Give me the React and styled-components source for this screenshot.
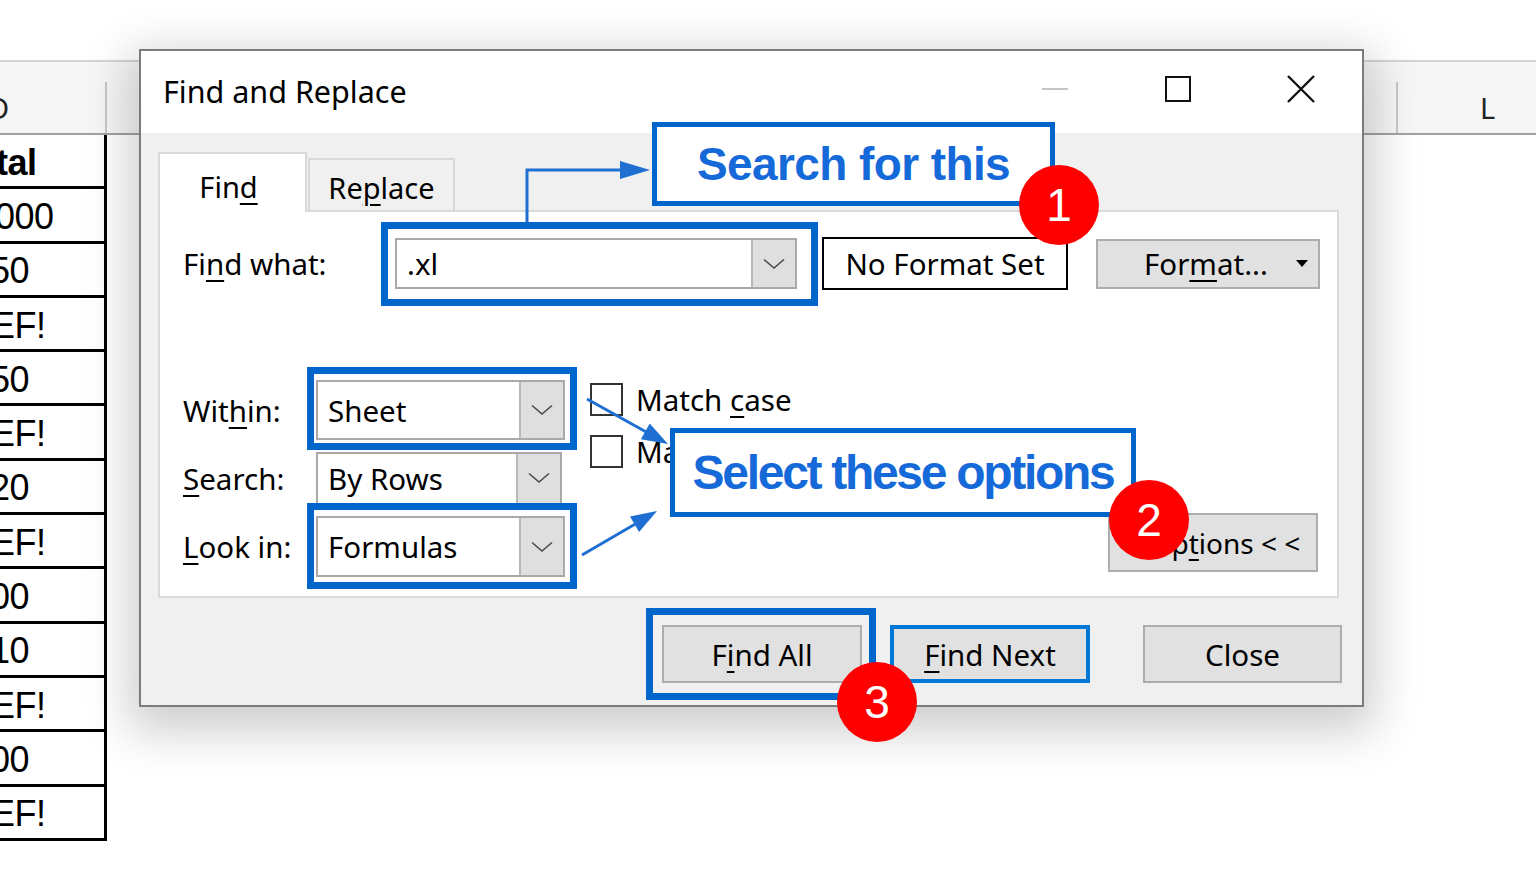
import styled, { createGlobalStyle } from "styled-components"

const GlobalStyle = createGlobalStyle`
  html, body {
    margin: 0;
    padding: 0;
    background: #fff;
  }
  body {
    font-family: "Noto Sans", "Liberation Sans", sans-serif;
    color: #000;
  }
`

const BLUE = "#0066cc"

const rows = [
  { text: "tal", shift: -4, bold: true },
  { text: "000", shift: -5 },
  { text: "50", shift: -10 },
  { text: "EF!", shift: -9 },
  { text: "50", shift: -10 },
  { text: "EF!", shift: -9 },
  { text: "20", shift: -10 },
  { text: "EF!", shift: -9 },
  { text: "00", shift: -10 },
  { text: "10", shift: -10 },
  { text: "EF!", shift: -9 },
  { text: "00", shift: -10 },
  { text: "EF!", shift: -9 },
]

const Chevron = () => (
  <svg width="22" height="12" viewBox="0 0 22 12">
    <polyline points="1,1.5 11,10 21,1.5" fill="none" stroke="#4a4a4a" strokeWidth="1.6" />
  </svg>
)

const Combo = ({ value, w, h, highlight }) => (
  <ComboBox $w={w} $h={h}>
    <ComboText>{value}</ComboText>
    <DropBtn><Chevron /></DropBtn>
    {highlight && <Highlight $inset={highlight} />}
  </ComboBox>
)

const App = () => {
  return (
    <Screen>
      <GlobalStyle />
      <Sheet>
        <HeaderBar>
          <ColHead $w={107} $shift={-12} $divider>D</ColHead>
          <HeadGap />
          <ColHead $w={140} $pad={82} $left>L</ColHead>
        </HeaderBar>
        {rows.map((r, i) => (
          <SheetRow key={i} $bold={r.bold}>
            <CellText $shift={r.shift}>{r.text}</CellText>
          </SheetRow>
        ))}
      </Sheet>

      <Dialog>
        <TitleBar>
          <Title>Find and Replace</Title>
          <WinControls>
            <WinBtn><MinLine /></WinBtn>
            <WinBtn><MaxBox /></WinBtn>
            <WinBtn>
              <svg width="28" height="28" viewBox="0 0 28 28">
                <path d="M1 1 L27 27 M27 1 L1 27" stroke="#111" strokeWidth="2.4" />
              </svg>
            </WinBtn>
          </WinControls>
        </TitleBar>

        <Body>
          <Tabs>
            <Tab $active><span>Fin<Key>d</Key></span></Tab>
            <Tab><span>Re<Key>p</Key>lace</span></Tab>
          </Tabs>

          <Panel>
            <FindRow>
              <Label $w={212}><span>Fi<Key>n</Key>d what:</span></Label>
              <Combo value=".xl" w={402} h={51} highlight="-18px -23px -19px -16px" />
              <FormatPreview>No Format Set</FormatPreview>
              <FormatBtn>
                <span>For<Key>m</Key>at...</span>
                <Caret />
              </FormatBtn>
            </FindRow>

            <Lower>
              <OptionGrid>
                <Label><span>Wit<Key>h</Key>in:</span></Label>
                <Combo value="Sheet" w={249} h={60} highlight="-15px -14px -12px -11px" />
                <Label><span><Key>S</Key>earch:</span></Label>
                <Combo value="By Rows" w={246} h={53} />
                <Label><span><Key>L</Key>ook in:</span></Label>
                <Combo value="Formulas" w={249} h={61} highlight="-15px -14px -14px -11px" />
              </OptionGrid>

              <Checks>
                <CheckRow><CheckBox /><span>Match <Key>c</Key>ase</span></CheckRow>
                <CheckRow><CheckBox /><span>Match entire cell c<Key>o</Key>ntents</span></CheckRow>
              </Checks>

              <OptionsBtn><span>Op<Key>t</Key>ions &lt; &lt;</span></OptionsBtn>
            </Lower>
          </Panel>

          <Actions>
            <DlgButton $w={200}>
              <span>F<Key>i</Key>nd All</span>
              <Highlight $inset="-19px -16px -19px -18px" />
            </DlgButton>
            <DlgButton $w={200} $default>
              <span><Key>F</Key>ind Next</span>
            </DlgButton>
            <DlgButton $w={199} $gap={53}>Close</DlgButton>
          </Actions>
        </Body>
      </Dialog>

      <Arrows width="1536" height="885" viewBox="0 0 1536 885">
        <g stroke="#1f6fd2" strokeWidth="3" fill="none">
          <polyline points="527,222 527,170 624,170" />
          <line x1="587" y1="399" x2="648" y2="433" />
          <line x1="582" y1="555" x2="637" y2="523" />
        </g>
        <g fill="#1f6fd2">
          <polygon points="620,161 650,170 620,179" />
          <polygon points="668,444 640.9,439.3 649.7,423.5" />
          <polygon points="657,511 639.1,532 630,516.4" />
        </g>
      </Arrows>

      <Callout $x={652} $y={122} $w={403} $h={84} $size={46} $spacing={-0.6}>
        Search for this
      </Callout>
      <Callout $x={670} $y={428} $w={466} $h={89} $size={48} $spacing={-2.3}>
        Select these options
      </Callout>

      <Badge $x={1059} $y={205}>1</Badge>
      <Badge $x={1149} $y={520}>2</Badge>
      <Badge $x={877} $y={702}>3</Badge>
    </Screen>
  )
}

const Screen = styled.div`
  position: relative;
  width: 1536px;
  height: 885px;
  overflow: hidden;
  background: #fff;
`

const Sheet = styled.div`
  display: flex;
  flex-direction: column;
  padding-top: 60px;
  font-family: "Liberation Sans", Arial, sans-serif;
`

const HeaderBar = styled.div`
  display: flex;
  height: 75px;
  box-sizing: border-box;
  border-top: 2px solid #d4d4d4;
  border-bottom: 2px solid #a2a2a2;
  background: #f6f6f6;
`

const ColHead = styled.div`
  width: ${p => p.$w}px;
  flex: none;
  box-sizing: border-box;
  margin-top: 20px;
  display: flex;
  align-items: center;
  overflow: hidden;
  padding-left: ${p => p.$pad || 0}px;
  text-indent: ${p => p.$shift || 0}px;
  font-family: "Noto Sans", sans-serif;
  font-size: 29px;
  color: #222;
  border-right: ${p => (p.$divider ? "2px solid #c8c8c8" : "none")};
  border-left: ${p => (p.$left ? "2px solid #c8c8c8" : "none")};
`

const HeadGap = styled.div`
  flex: 1;
`

const SheetRow = styled.div`
  width: 107px;
  height: 54.3px;
  box-sizing: border-box;
  border-right: 3px solid #000;
  border-bottom: 3px solid #000;
  display: flex;
  align-items: center;
  padding-top: 4px;
  overflow: hidden;
  white-space: nowrap;
  font-size: 36px;
  font-weight: ${p => (p.$bold ? 700 : 400)};
  letter-spacing: -0.5px;
`

const CellText = styled.span`
  margin-left: ${p => p.$shift}px;
`

const Dialog = styled.div`
  position: absolute;
  left: 139px;
  top: 49px;
  width: 1225px;
  height: 658px;
  box-sizing: border-box;
  border: 2px solid #7b7b7b;
  background: #f0f0f0;
  box-shadow: 0 14px 44px 10px rgba(0, 0, 0, 0.2);
  display: flex;
  flex-direction: column;
  font-family: "Noto Sans", "Liberation Sans", sans-serif;
  font-size: 29.5px;
`

const TitleBar = styled.div`
  height: 82px;
  flex: none;
  display: flex;
  align-items: center;
  background: #fff;
  padding-left: 22px;
`

const Title = styled.div`
  font-size: 30.5px;
  margin-top: -2px;
`

const WinControls = styled.div`
  margin-left: auto;
  display: flex;
  height: 100%;
`

const WinBtn = styled.div`
  width: 123px;
  display: flex;
  align-items: center;
  justify-content: center;
  margin-top: -6px;
`

const MinLine = styled.div`
  width: 26px;
  height: 2px;
  background: #c4c4c4;
`

const MaxBox = styled.div`
  width: 26px;
  height: 26px;
  box-sizing: border-box;
  border: 2.5px solid #111;
`

const Body = styled.div`
  flex: 1;
  display: flex;
  flex-direction: column;
  padding: 19px 20px 0 17px;
`

const Tabs = styled.div`
  display: flex;
  align-items: flex-end;
  height: 58px;
  position: relative;
  z-index: 1;
`

const Tab = styled.div`
  box-sizing: border-box;
  width: ${p => (p.$active ? 149 : 147)}px;
  height: ${p => (p.$active ? 60 : 52)}px;
  margin-bottom: ${p => (p.$active ? -2 : 0)}px;
  margin-left: ${p => (p.$active ? 0 : 1)}px;
  background: ${p => (p.$active ? "#fff" : "#f0f0f0")};
  border: 2px solid #d9d9d9;
  border-bottom: none;
  display: flex;
  align-items: center;
  justify-content: center;
  padding-top: ${p => (p.$active ? 6 : 4)}px;
  padding-right: ${p => (p.$active ? 8 : 0)}px;
  font-size: 29px;
`

const Key = styled.span`
  text-decoration: underline;
  text-decoration-thickness: 2px;
  text-underline-offset: 5px;
`

const Panel = styled.div`
  height: 388px;
  margin-right: 3px;
  box-sizing: border-box;
  border: 2px solid #d9d9d9;
  background: #fff;
  padding: 25px 0 0 23px;
  display: flex;
  flex-direction: column;
`

const FindRow = styled.div`
  display: flex;
  align-items: center;
  height: 53px;
`

const Label = styled.div`
  width: ${p => (p.$w ? `${p.$w}px` : "auto")};
  flex: none;
  display: flex;
  align-items: center;
  white-space: nowrap;
`

const ComboBox = styled.div`
  position: relative;
  width: ${p => p.$w}px;
  height: ${p => p.$h}px;
  flex: none;
  box-sizing: border-box;
  border: 2px solid #a9a9a9;
  background: #fff;
  display: flex;
  align-items: stretch;
`

const ComboText = styled.div`
  flex: 1;
  display: flex;
  align-items: center;
  padding-left: 10px;
`

const DropBtn = styled.div`
  width: 44px;
  box-sizing: border-box;
  border-left: 2px solid #b8b8b8;
  background: #dfdfdf;
  display: flex;
  align-items: center;
  justify-content: center;
`

const Highlight = styled.div`
  position: absolute;
  inset: ${p => p.$inset};
  border: 7px solid ${BLUE};
  pointer-events: none;
`

const FormatPreview = styled.div`
  margin-left: 25px;
  width: 246px;
  height: 53px;
  box-sizing: border-box;
  border: 2px solid #000;
  display: flex;
  align-items: center;
  justify-content: center;
`

const FormatBtn = styled.div`
  margin-left: 28px;
  width: 224px;
  height: 50px;
  box-sizing: border-box;
  border: 2px solid #adadad;
  background: #e1e1e1;
  display: flex;
  align-items: center;
  padding-left: 46px;
  padding-right: 10px;
`

const Caret = styled.div`
  margin-left: auto;
  width: 0;
  height: 0;
  border-left: 6px solid transparent;
  border-right: 6px solid transparent;
  border-top: 7px solid #000;
`

const Lower = styled.div`
  margin-top: 90px;
  height: 197px;
  display: flex;
`

const OptionGrid = styled.div`
  display: grid;
  grid-template-columns: 133px 249px;
  grid-template-rows: 60px 53px 61px;
  row-gap: 11.5px;
  align-items: center;
`

const Checks = styled.div`
  margin-left: 25px;
  padding-top: 3px;
  display: flex;
  flex-direction: column;
  gap: 19px;
`

const CheckRow = styled.div`
  display: flex;
  align-items: center;
  height: 33px;
  white-space: nowrap;
`

const CheckBox = styled.div`
  width: 33px;
  height: 33px;
  box-sizing: border-box;
  border: 2px solid #333;
  background: #fff;
  margin-right: 13px;
  flex: none;
`

const OptionsBtn = styled.div`
  margin-left: auto;
  margin-right: 19px;
  margin-bottom: 5px;
  align-self: flex-end;
  width: 210px;
  height: 59px;
  box-sizing: border-box;
  border: 2px solid #adadad;
  background: #e1e1e1;
  display: flex;
  align-items: center;
  justify-content: center;
  padding-left: 24px;
  font-size: 28px;
`

const Actions = styled.div`
  display: flex;
  justify-content: flex-end;
  margin-top: 27px;
`

const DlgButton = styled.div`
  position: relative;
  width: ${p => p.$w}px;
  height: 58px;
  margin-left: ${p => (p.$gap ? p.$gap : 28)}px;
  box-sizing: border-box;
  border: ${p => (p.$default ? "4px solid #0078d7" : "2px solid #adadad")};
  background: #e1e1e1;
  display: flex;
  align-items: center;
  justify-content: center;
`

const Arrows = styled.svg`
  position: absolute;
  left: 0;
  top: 0;
  pointer-events: none;
`

const Callout = styled.div`
  position: absolute;
  left: ${p => p.$x}px;
  top: ${p => p.$y}px;
  width: ${p => p.$w}px;
  height: ${p => p.$h}px;
  box-sizing: border-box;
  border: 5px solid ${BLUE};
  background: #fff;
  display: flex;
  align-items: center;
  justify-content: center;
  font-family: "Liberation Sans", Arial, sans-serif;
  font-weight: 700;
  font-size: ${p => p.$size}px;
  letter-spacing: ${p => p.$spacing}px;
  color: #1569d8;
  white-space: nowrap;
`

const Badge = styled.div`
  position: absolute;
  left: ${p => p.$x - 40}px;
  top: ${p => p.$y - 40}px;
  width: 80px;
  height: 80px;
  border-radius: 50%;
  background: #fe0000;
  color: #fff;
  display: flex;
  align-items: center;
  justify-content: center;
  font-family: "Liberation Sans", Arial, sans-serif;
  font-size: 46px;
`

export default App
